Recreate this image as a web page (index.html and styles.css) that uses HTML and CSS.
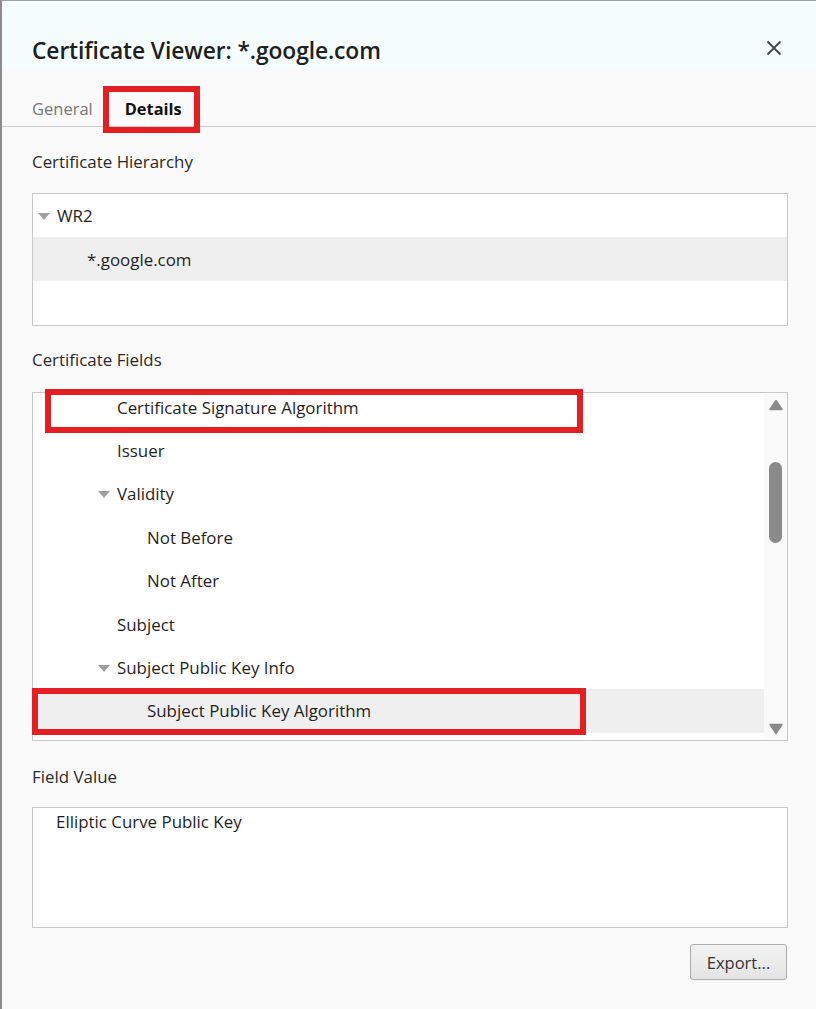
FILE: index.html
```html
<!DOCTYPE html>
<html>
<head>
<meta charset="utf-8">
<link rel="stylesheet" href="styles.css">
</head>
<body>
<div class="dialog">
  <div class="header">
    <h1 class="title">Certificate Viewer: *.google.com</h1>
    <svg class="close" width="16" height="16" viewBox="0 0 16 16"><path d="M1.5 1.5 L14.5 14.5 M14.5 1.5 L1.5 14.5" stroke="#444" stroke-width="1.8" fill="none"/></svg>
  </div>
  <div class="tabs">
    <div class="tab">General</div>
    <div class="tab active">Details<span class="mark mark-tab"></span></div>
  </div>
  <div class="content">
    <div class="label lbl-hier">Certificate Hierarchy</div>
    <div class="box hier">
      <div class="row"><span class="tri"></span>WR2</div>
      <div class="row sel lvl1">*.google.com</div>
    </div>

    <div class="label lbl-fields">Certificate Fields</div>
    <div class="box fields">
      <div class="list">
        <div class="rows">
          <div class="row lvl2">Certificate Signature Algorithm</div>
          <div class="row lvl2">Issuer</div>
          <div class="row lvl2t"><span class="tri"></span>Validity</div>
          <div class="row lvl3">Not Before</div>
          <div class="row lvl3">Not After</div>
          <div class="row lvl2">Subject</div>
          <div class="row lvl2t"><span class="tri"></span>Subject Public Key Info</div>
          <div class="row sel lvl3">Subject Public Key Algorithm</div>
        </div>
      </div>
      <div class="scrollbar">
        <svg class="arrow up" width="14" height="12" viewBox="0 0 14 12"><path d="M7 1.5 L13 10.5 L1 10.5 Z" fill="#8a8a8a" stroke="#8a8a8a" stroke-width="1.5" stroke-linejoin="round"/></svg>
        <div class="thumb"></div>
        <svg class="arrow down" width="14" height="12" viewBox="0 0 14 12"><path d="M7 10.5 L13 1.5 L1 1.5 Z" fill="#8a8a8a" stroke="#8a8a8a" stroke-width="1.5" stroke-linejoin="round"/></svg>
      </div>
      <span class="mark mark-1"></span>
      <span class="mark mark-2"></span>
    </div>

    <div class="label lbl-value">Field Value</div>
    <div class="box value">Elliptic Curve Public Key</div>

    <div class="actions">
      <button class="btn">Export...</button>
    </div>
  </div>
</div>
</body>
</html>
```

FILE: styles.css
```css
html, body {
  margin: 0;
  padding: 0;
  background: #fafafa;
}
body {
  font-family: "Open Sans", "Noto Sans", sans-serif;
  color: #1f1f1f;
}
.dialog {
  width: 816px;
  height: 1009px;
  box-sizing: border-box;
  border-top: 1px solid #a3a3a3;
  border-left: 2px solid #8c8c8c;
  background: #fafafa;
}
.header {
  height: 67px;
  box-sizing: border-box;
  background: #f6fdfd;
  display: flex;
  align-items: center;
  justify-content: space-between;
  padding: 32px 32px 0 30px;
}
.title {
  margin: 0;
  font-size: 22.8px;
  font-weight: 600;
  color: #202020;
  letter-spacing: -0.1px;
  line-height: 30px;
}
.close {
  margin-right: 2px;
  margin-top: -6px;
}
.tabs {
  height: 59px;
  box-sizing: border-box;
  border-bottom: 1px solid #cccccc;
  display: flex;
  align-items: flex-end;
  padding-left: 30px;
  gap: 32px;
}
.tab {
  position: relative;
  font-size: 16.5px;
  color: #777;
  padding-bottom: 7px;
  line-height: 20px;
}
.tab.active {
  color: #111;
  font-weight: 700;
  font-size: 16.4px;
}
.mark {
  position: absolute;
  border: 6px solid #e41e23;
  box-sizing: border-box;
  pointer-events: none;
}
.mark-tab {
  left: -22px;
  top: -13px;
  width: 97px;
  height: 47px;
}
.content {
  padding: 0 28px 0 30px;
}
.label {
  font-size: 16.9px;
  line-height: 20px;
  color: #2a2a2a;
}
.lbl-hier { margin-top: 25px; }
.lbl-fields { margin-top: 24px; }
.lbl-value { margin-top: 26px; }
.box {
  border: 1px solid #c8c8c8;
  background: #fff;
  box-sizing: border-box;
}
.hier {
  margin-top: 21px;
  height: 133px;
}
.row {
  height: 43.43px;
  display: flex;
  align-items: center;
  font-size: 16.9px;
  color: #1f1f1f;
  white-space: nowrap;
}
.hier .row { padding-left: 5px; }
.hier .row.lvl1 { padding-left: 54px; }
.row.sel { background: #efefef; }
.tri {
  display: inline-block;
  width: 0;
  height: 0;
  border-left: 6px solid transparent;
  border-right: 6px solid transparent;
  border-top: 7px solid #a0a0a0;
  margin-right: 7px;
  margin-top: 1px;
}
.fields {
  position: relative;
  margin-top: 22px;
  height: 349px;
  display: flex;
}
.list {
  flex: 1;
  overflow: hidden;
}
.rows {
  margin-top: -7.7px;
}
.fields .row.lvl2 { padding-left: 84px; }
.fields .row.lvl2t { padding-left: 65px; }
.fields .row.lvl3 { padding-left: 114px; }
.scrollbar {
  width: 23px;
  background: #fafafa;
  position: relative;
  display: flex;
  flex-direction: column;
  align-items: center;
}
.arrow { display: block; }
.arrow.up { margin-top: 6px; }
.thumb {
  width: 13px;
  height: 81px;
  border-radius: 6.5px;
  background: #8a8a8a;
  margin-top: 51px;
}
.arrow.down { margin-top: auto; margin-bottom: 5px; }
.mark-1 {
  left: 12px;
  top: -4px;
  width: 538px;
  height: 44px;
}
.mark-2 {
  left: -1px;
  top: 295px;
  width: 554px;
  height: 47px;
}
.value {
  margin-top: 20px;
  height: 121px;
  padding: 2px 0 0 23px;
  font-size: 16.9px;
  line-height: 24px;
}
.actions {
  display: flex;
  justify-content: flex-end;
  margin-top: 16px;
  padding-right: 1px;
}
.btn {
  font-family: "Open Sans", "Noto Sans", sans-serif;
  font-size: 16.5px;
  color: #333;
  width: 97px;
  height: 36px;
  border: 1px solid #adadad;
  border-radius: 3px;
  background: linear-gradient(#f2f2f2, #e4e4e4);
  padding: 0;
}
```
